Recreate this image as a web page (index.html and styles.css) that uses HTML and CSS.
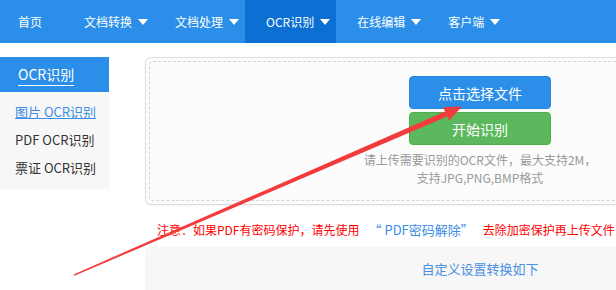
FILE: index.html
```html
<!DOCTYPE html>
<html lang="zh-CN">
<head>
<meta charset="utf-8">
<title>OCR识别</title>
<link rel="stylesheet" href="styles.css">
</head>
<body>
<nav class="nav">
  <a class="nav-item first">首页</a>
  <a class="nav-item">文档转换<span class="caret"></span></a>
  <a class="nav-item">文档处理<span class="caret"></span></a>
  <a class="nav-item active">OCR识别<span class="caret"></span></a>
  <a class="nav-item">在线编辑<span class="caret"></span></a>
  <a class="nav-item">客户端<span class="caret"></span></a>
</nav>
<div class="page">
  <aside class="side">
    <div class="side-head"><span class="side-title">OCR识别</span></div>
    <ul class="side-list">
      <li class="side-link current">图片 OCR识别</li>
      <li class="side-link">PDF OCR识别</li>
      <li class="side-link">票证 OCR识别</li>
    </ul>
  </aside>
  <main class="main">
    <div class="upload">
      <div class="upload-inner">
        <button class="btn btn-blue">点击选择文件</button>
        <button class="btn btn-green">开始识别</button>
        <p class="hint">请上传需要识别的OCR文件，最大支持2M，<br>支持JPG,PNG,BMP格式</p>
      </div>
    </div>
    <p class="notice">注意：如果PDF有密码保护，请先使用<span class="notice-link">“ PDF密码解除”</span>去除加密保护再上传文件</p>
    <div class="settings"><span class="settings-title">自定义设置转换如下</span></div>
  </main>
</div>
<svg class="arrow" width="616" height="290" viewBox="0 0 616 290">
  <polygon points="73.6,274.4 445,111.4 447.2,116.4 74.4,275.8" fill="#f43b3b"/>
  <polygon points="462,106.5 443,107.2 449.2,120.6" fill="#f43b3b"/>
</svg>
</body>
</html>
```
FILE: styles.css
```css
html, body {
  margin: 0;
  padding: 0;
}
body {
  width: 616px;
  height: 290px;
  overflow: hidden;
  position: relative;
  background: #fff;
  font-family: "Noto Sans CJK SC", "Noto Sans", sans-serif;
  color: #333;
}
.nav {
  display: flex;
  height: 43px;
  background: #2b8fe9;
}
.nav-item {
  display: flex;
  align-items: center;
  padding: 0 6px 0 21px;
  color: #fff;
  font-size: 12px;
  line-height: 43px;
}
.nav-item.first {
  padding: 0 21px 0 18px;
}
.nav-item.active {
  background: #0b6fd3;
}
.caret {
  width: 0;
  height: 0;
  margin-left: 6px;
  border-left: 5px solid transparent;
  border-right: 5px solid transparent;
  border-top: 6px solid #fff;
}
.page {
  display: flex;
  padding-top: 14px;
}
.side {
  flex: 0 0 109px;
  width: 109px;
  margin-right: 36px;
}
.side-head {
  height: 35px;
  background: #2b8fe9;
  padding-left: 18px;
  box-sizing: border-box;
  padding-top: 4px;
}
.side-title {
  display: inline-block;
  color: #fff;
  font-size: 14px;
  line-height: 19px;
  padding-bottom: 1px;
  border-bottom: 1px solid #fff;
}
.side-list {
  list-style: none;
  margin: 0;
  padding: 6px 0 7px 15px;
  background: #f7f7f7;
}
.side-link {
  font-size: 13px;
  line-height: 28px;
  color: #333;
}
.side-link.current {
  color: #3b8de6;
  text-decoration: underline;
}
.main {
  flex: 0 0 670px;
  width: 670px;
}
.upload {
  border: 1px solid #dedede;
  border-radius: 6px;
  padding: 3px;
  background: #fcfcfc;
  box-shadow: 0 1px 2px rgba(0,0,0,0.05);
}
.upload-inner {
  border: 1px dashed #d4d4d4;
  border-radius: 4px;
  padding-top: 14px;
  box-sizing: border-box;
  display: flex;
  flex-direction: column;
  align-items: center;
  height: 140px;
}
.btn {
  width: 142px;
  height: 33px;
  border-radius: 4px;
  font-family: inherit;
  font-size: 14px;
  color: #fff;
  padding: 0;
  box-sizing: border-box;
}
.btn-blue {
  background: #2b8fe9;
  border: 1px solid #2785dc;
}
.btn-green {
  margin-top: 3px;
  background: #5cb85c;
  border: 1px solid #4cae4c;
}
.hint {
  margin: 6px 0 0;
  font-size: 12px;
  line-height: 18px;
  color: #999;
  text-align: center;
}
.notice {
  margin: 16px 0 0;
  padding-left: 12px;
  font-size: 12px;
  line-height: 18px;
  color: #f00;
  white-space: nowrap;
}
.notice-link {
  color: #3b8de6;
  font-size: 13px;
  margin: 0 9px 0 9px;
}
.settings {
  margin-top: 8px;
  height: 60px;
  background: #f7f7f7;
  border-radius: 4px;
  display: flex;
  justify-content: center;
  padding-top: 13px;
  box-sizing: border-box;
}
.settings-title {
  color: #4a90e2;
  font-size: 13px;
  line-height: 18px;
}
.arrow {
  position: absolute;
  left: 0;
  top: 0;
  pointer-events: none;
}
```
